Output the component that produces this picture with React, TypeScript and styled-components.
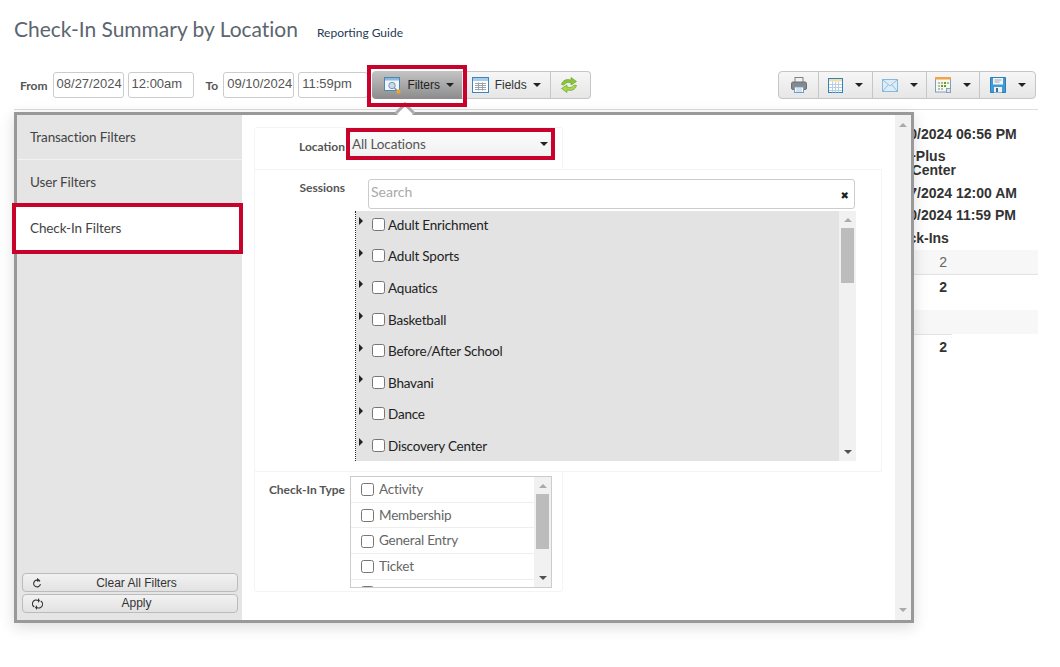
import styled, { createGlobalStyle } from "styled-components";

const RED = "#c8032b";

const GlobalStyle = createGlobalStyle`
  html, body { margin: 0; padding: 0; background: #fff; }
  body { width: 1060px; height: 667px; overflow: hidden; font-family: "Liberation Sans", Arial, sans-serif; color: #333; }
`;

const sessions = [
  "Adult Enrichment",
  "Adult Sports",
  "Aquatics",
  "Basketball",
  "Before/After School",
  "Bhavani",
  "Dance",
  "Discovery Center",
];

const checkInTypes = ["Activity", "Membership", "General Entry", "Ticket", "Admission"];

const FilterIcon = () => (
  <svg width="17" height="17" viewBox="0 0 17 17">
    <rect x=".5" y=".5" width="15" height="13" fill="#f1f6fa" stroke="#4a87b5" />
    <rect x="1" y="1" width="14" height="2.500" fill="#8db9da" />
    <circle cx="8" cy="8.500" r="3.200" fill="#c4dcee" stroke="#7e95a6" />
    <path d="M10.300 10.800l2.500 2.500" stroke="#7e95a6" strokeWidth="1.400" />
    <rect x="12.500" y="12.500" width="4" height="4" rx="1.500" fill="#f0a52a" />
  </svg>
);

const FieldsIcon = () => (
  <svg width="17" height="16" viewBox="0 0 17 16">
    <rect x=".5" y=".5" width="16" height="15" fill="#fff" stroke="#3a86bd" />
    <rect x="1" y="1" width="15" height="3" fill="#a9cbe5" />
    <path d="M3 6.500h11M3 8.500h11M3 10.500h11M3 12.500h11M6.500 5.500v8M10.500 5.500v8" stroke="#9aa3aa" fill="none" />
  </svg>
);

const RefreshIcon = () => (
  <svg width="18" height="16" viewBox="0 0 18 16">
    <path d="M1.500 7.500C2.500 3.500 6.500 1.500 11 3.200V.5l5.500 4-5.500 3.500V5.800C8 5 5.500 5.500 4 8z" fill="#8cc63a" stroke="#5c9a1c" strokeWidth=".6" />
    <path d="M16.500 8.500c-1 4-5 6-9.500 4.300v2.700L1.500 11.500 7 8v2.200c3 .8 5.500.3 7-2.200z" fill="#a8d84a" stroke="#5c9a1c" strokeWidth=".6" />
  </svg>
);

const PrintIcon = () => (
  <svg width="16" height="16" viewBox="0 0 16 16">
    <rect x="4" y=".5" width="8" height="5" fill="#eef1f3" stroke="#7d8387" />
    <rect x=".5" y="5" width="15" height="7.500" rx="1.500" fill="#84898d" stroke="#6b6f73" />
    <rect x="3.500" y="10" width="9" height="5.500" fill="#fff" stroke="#6f9fc4" />
    <path d="M5 12h6M5 14h6" stroke="#a9c3d6" />
  </svg>
);

const GridIcon = () => (
  <svg width="15" height="15" viewBox="0 0 15 15">
    <rect x=".5" y=".5" width="14" height="14" fill="#fff" stroke="#2f83bd" />
    <rect x="1" y="1" width="13" height="2.500" fill="#f5dfa0" />
    <path d="M1 6.500h13M1 9.500h13M1 12.500h13M4.500 3.500v11M7.500 3.500v11M10.500 3.500v11" stroke="#b5d0e4" fill="none" />
  </svg>
);

const MailIcon = () => (
  <svg width="16" height="13" viewBox="0 0 16 13">
    <rect x=".5" y=".5" width="15" height="12" fill="#dcedf9" stroke="#86b8da" />
    <path d="M1 1l7 6 7-6M1 12l5-6M15 12l-5-6" stroke="#8ebfe0" fill="none" />
  </svg>
);

const ScheduleIcon = () => (
  <svg width="16" height="16" viewBox="0 0 16 16">
    <rect x=".5" y=".5" width="15" height="14.500" fill="#f6f6f2" stroke="#7ba0bd" />
    <rect x="0" y="0" width="16" height="2.500" fill="#f0a24c" />
    <path d="M3 5h2v2H3zM3 8h2v2H3zM3 11h2v2H3zM6 11h2v2H6z" fill="#b9bdb2" />
    <path d="M9 5h2v2H9zM6 8h2v2H6zM9 8h2v2H9z" fill="#5f9e27" />
    <path d="M12 5h2v2h-2zM6 5h2v2H6z" fill="#a9c07a" />
    <rect x="11.500" y="11.500" width="4" height="4" fill="#dfe4e8" stroke="#8ba0b2" />
  </svg>
);

const SaveIcon = () => (
  <svg width="16" height="16" viewBox="0 0 16 16">
    <path d="M.5.5h15v15H.5z" fill="#3f9ad6" stroke="#2b7db5" />
    <rect x="3" y="1" width="10" height="6.500" fill="#f2f5f7" />
    <path d="M4.500 3h7M4.500 5h5" stroke="#99a9b5" />
    <rect x="4" y="10" width="8" height="5.500" fill="#eef1f3" />
    <rect x="6" y="11" width="2" height="4" fill="#3a6f96" />
  </svg>
);

const ClearIcon = () => (
  <svg width="10" height="11" viewBox="0 0 10 11">
    <path d="M7.800 4A3.400 3.400 0 1 0 8.400 6.500" fill="none" stroke="#333" strokeWidth="1.100" />
    <path d="M5 .5L8.500 3 5 4.300z" fill="#333" />
  </svg>
);

const ApplyIcon = () => (
  <svg width="11" height="13" viewBox="0 0 11 13">
    <path d="M2.300 9.500A3.700 3.700 0 0 1 6 3M8.700 3.500A3.700 3.700 0 0 1 5 10" fill="none" stroke="#333" strokeWidth="1.100" />
    <path d="M6 .5v5L8 3zM5 7.500v5L3 10z" fill="#333" />
  </svg>
);

export default function App() {
  return (
    <>
      <GlobalStyle />
      <Page>
        <TitleRow>
          <Title>Check-In Summary by Location</Title>
          <GuideLink>Reporting Guide</GuideLink>
        </TitleRow>
        <Toolbar>
          <FieldLabel>From</FieldLabel>
          <DateBox $width={71}>08/27/2024</DateBox>
          <DateBox $width={66}>12:00am</DateBox>
          <FieldLabel $gap>To</FieldLabel>
          <DateBox $width={71}>09/10/2024</DateBox>
          <DateBox $width={70}>11:59pm</DateBox>
          <ButtonGroup>
            <FiltersButton>
              <FilterIcon />
              <span>Filters</span>
              <Caret />
            </FiltersButton>
            <ToolButton $width={89}>
              <FieldsIcon />
              <span>Fields</span>
              <Caret />
            </ToolButton>
            <ToolButton $width={40} $nudge={3}>
              <RefreshIcon />
            </ToolButton>
          </ButtonGroup>
          <ActionGroup>
            <ActionButton $width={40}>
              <PrintIcon />
            </ActionButton>
            <ActionButton $width={54}>
              <GridIcon />
              <Caret />
            </ActionButton>
            <ActionButton $width={54}>
              <MailIcon />
              <Caret />
            </ActionButton>
            <ActionButton $width={53}>
              <ScheduleIcon />
              <Caret />
            </ActionButton>
            <ActionButton $width={55}>
              <SaveIcon />
              <Caret />
            </ActionButton>
          </ActionGroup>
        </Toolbar>
        <Rule />
        <Report>
          <ReportLine>09/10/2024 06:56 PM</ReportLine>
          <ReportBlock>
            Rec+Plus
            <br />
            Rec Center
          </ReportBlock>
          <ReportLine>08/27/2024 12:00 AM</ReportLine>
          <ReportLine>09/10/2024 11:59 PM</ReportLine>
          <ReportHead>Check-Ins</ReportHead>
          <ReportRow $shaded>
            <ReportValue>2</ReportValue>
          </ReportRow>
          <ReportRow>
            <ReportValue $bold>2</ReportValue>
          </ReportRow>
          <ReportSpacer />
          <ReportRow>
            <ReportValue $bold $ruled>
              2
            </ReportValue>
          </ReportRow>
        </Report>

        <FilterPanel>
          <Notch />
          <Sidebar>
            <SideItem>Transaction Filters</SideItem>
            <SideItem>User Filters</SideItem>
            <SideItem $active>Check-In Filters</SideItem>
            <SideActions>
              <SideButton $low>
                <ClearIcon />
                <span>Clear All Filters</span>
              </SideButton>
              <SideButton>
                <ApplyIcon />
                <span>Apply</span>
              </SideButton>
            </SideActions>
          </Sidebar>
          <PanelBody>
            <Forms>
              <LocationRow>
                <RowLabel $inset={11}>Location</RowLabel>
                <LocationSelect>
                  <span>All Locations</span>
                  <Caret />
                </LocationSelect>
              </LocationRow>
              <SessionsRow>
                <RowLabel>Sessions</RowLabel>
                <SessionsColumn>
                  <SearchBox>
                    <span>Search</span>
                    <ClearX>✖</ClearX>
                  </SearchBox>
                  <Tree>
                    <TreeList>
                      {sessions.map((name) => (
                        <TreeRow key={name}>
                          <TreeArrow />
                          <Check />
                          <TreeName>{name}</TreeName>
                        </TreeRow>
                      ))}
                    </TreeList>
                    <Scrollbar>
                      <UpArrow $dim />
                      <ScrollThumb />
                      <DownArrow />
                    </Scrollbar>
                  </Tree>
                </SessionsColumn>
              </SessionsRow>
              <TypeRow>
                <RowLabel>Check-In Type</RowLabel>
                <TypeBox>
                  <TypeList>
                    {checkInTypes.map((name) => (
                      <TypeItem key={name}>
                        <Check />
                        <TypeName>{name}</TypeName>
                      </TypeItem>
                    ))}
                  </TypeList>
                  <Scrollbar>
                    <UpArrow $dim />
                    <ScrollThumb />
                    <DownArrow />
                  </Scrollbar>
                </TypeBox>
              </TypeRow>
            </Forms>
            <PanelScroll>
              <UpArrow $dim />
              <DownArrow $dim />
            </PanelScroll>
          </PanelBody>
        </FilterPanel>
      </Page>
    </>
  );
}

const Page = styled.div`
  position: relative;
  width: 1060px;
  height: 667px;
  padding: 0 22px 0 14px;
  box-sizing: border-box;
  overflow: hidden;
`;

const TitleRow = styled.div`
  display: flex;
  align-items: baseline;
  gap: 19px;
  height: 71px;
  padding-top: 16px;
  box-sizing: border-box;
`;

const Title = styled.h1`
  margin: 0;
  font: 400 21px/26px Lato, sans-serif;
  letter-spacing: -0.02px;
  color: #5b6670;
`;

const GuideLink = styled.a`
  font: 400 12px/16px Lato, sans-serif;
  color: #1f3a56;
`;

const Toolbar = styled.div`
  display: flex;
  align-items: flex-start;
  height: 38px;
  padding-left: 6px;
`;

const FieldLabel = styled.span<{ $gap?: boolean }>`
  font: 700 12px/28px Lato, sans-serif;
  color: #555;
  margin: 1px 5px 0 ${({ $gap }) => ($gap ? "8px" : "0")};
`;

const DateBox = styled.div<{ $width: number }>`
  width: ${({ $width }) => $width}px;
  height: 26px;
  margin-right: 4px;
  margin-top: 1px;
  padding-left: 3px;
  box-sizing: border-box;
  border: 1px solid #ccc;
  border-radius: 3px;
  font: 400 13px/22px "Liberation Sans", sans-serif;
  color: #555;
`;

const ButtonGroup = styled.div`
  display: flex;
`;

const ToolButton = styled.div<{ $width: number; $nudge?: number }>`
  width: ${({ $width }) => $width}px;
  height: 28px;
  box-sizing: border-box;
  display: flex;
  align-items: center;
  justify-content: center;
  gap: 6px;
  padding: 0 ${({ $nudge }) => $nudge ?? 0}px 0 0;
  font: 400 12px "Liberation Sans", sans-serif;
  color: #333;
  background: linear-gradient(#f6f6f6, #e6e6e6);
  border: 1px solid #c6c6c6;
  border-left: none;
  &:last-child {
    border-radius: 0 4px 4px 0;
  }
`;

const FiltersButton = styled.div`
  position: relative;
  width: 90px;
  height: 28px;
  box-sizing: border-box;
  display: flex;
  align-items: center;
  justify-content: center;
  gap: 6px;
  padding-left: 4px;
  font: 400 12px "Liberation Sans", sans-serif;
  color: #222;
  background: linear-gradient(#c4c4c4, #8c8c8c);
  border-radius: 4px 0 0 4px;
  z-index: 3;
  &::after {
    content: "";
    position: absolute;
    inset: -6px -5px -8px -5px;
    border: 4px solid ${RED};
  }
`;

const ActionGroup = styled.div`
  display: flex;
  margin-left: auto;
  margin-right: 2px;
  border: 1px solid #c6c6c6;
  border-radius: 4px;
  height: 28px;
  box-sizing: border-box;
  background: linear-gradient(#f6f6f6, #e6e6e6);
  overflow: hidden;
`;

const ActionButton = styled.div<{ $width: number }>`
  width: ${({ $width }) => $width}px;
  display: flex;
  align-items: center;
  justify-content: center;
  gap: 12px;
  box-sizing: border-box;
  border-right: 1px solid #c6c6c6;
  &:last-child {
    border-right: none;
  }
`;

const Caret = styled.i`
  display: block;
  width: 0;
  height: 0;
  border-left: 4px solid transparent;
  border-right: 4px solid transparent;
  border-top: 4px solid #222;
`;

const Rule = styled.div`
  height: 1px;
  background: #ddd;
`;

const Report = styled.div`
  margin-left: 868px;
  padding-top: 16px;
  font: 700 14px/16px "Liberation Sans", sans-serif;
  color: #333;
`;

const ReportLine = styled.div`
  white-space: nowrap;
  margin-bottom: 6px;
`;

const ReportBlock = styled.div`
  line-height: 14px;
  margin: 7px 0 8px;
  white-space: nowrap;
`;

const ReportHead = styled.div`
  margin-top: 7px;
  height: 20px;
`;

const ReportRow = styled.div<{ $shaded?: boolean }>`
  height: ${({ $shaded }) => ($shaded ? "25px" : "35px")};
  background: ${({ $shaded }) => ($shaded ? "#f7f7f7" : "transparent")};
  border-bottom: ${({ $shaded }) => ($shaded ? "1px solid #e2e2e2" : "none")};
  box-sizing: border-box;
`;

const ReportSpacer = styled.div`
  height: 24px;
  background: #f7f7f7;
`;

const ReportValue = styled.div<{ $bold?: boolean; $ruled?: boolean }>`
  width: 70px;
  padding-right: 5px;
  box-sizing: border-box;
  text-align: right;
  line-height: ${({ $ruled }) => ($ruled ? "24px" : "25px")};
  font-weight: ${({ $bold }) => ($bold ? 700 : 400)};
  color: ${({ $bold }) => ($bold ? "#333" : "#666")};
  border-top: ${({ $ruled }) => ($ruled ? "1px solid #e2e2e2" : "none")};
`;

const FilterPanel = styled.div`
  position: absolute;
  left: 14px;
  top: 112px;
  width: 900px;
  height: 511px;
  box-sizing: border-box;
  display: flex;
  background: #fff;
  border: 3px solid #999;
  box-shadow: 0 4px 14px rgba(0, 0, 0, 0.14);
`;

const Notch = styled.div`
  position: absolute;
  left: 381px;
  top: -10px;
  width: 14px;
  height: 14px;
  background: #fff;
  border-left: 3px solid #aaa;
  border-top: 3px solid #aaa;
  box-sizing: border-box;
  transform: rotate(45deg);
`;

const Sidebar = styled.div`
  width: 225px;
  flex: none;
  display: flex;
  flex-direction: column;
  background: #e5e5e5;
`;

const SideItem = styled.div<{ $active?: boolean }>`
  height: ${({ $active }) => ($active ? "51px" : "45px")};
  box-sizing: border-box;
  padding-left: 13px;
  font: 400 13.5px/44px Lato, sans-serif;
  letter-spacing: -0.12px;
  color: #444;
  border-bottom: 1px solid #f2f2f2;
  ${({ $active }) =>
    $active &&
    `
    position: relative;
    margin: -2px -1px 0 -5px;
    padding-left: 14px;
    background: #fff;
    border: 4px solid ${RED};
    line-height: 43px;
  `}
`;

const SideActions = styled.div`
  margin-top: auto;
  padding: 0 4px 7px 5px;
  display: flex;
  flex-direction: column;
  gap: 2px;
`;

const SideButton = styled.div<{ $low?: boolean }>`
  position: relative;
  height: 19px;
  box-sizing: border-box;
  display: flex;
  justify-content: center;
  padding: ${({ $low }) => ($low ? "1px" : "0")} 0 0 13px;
  font: 400 12px/16px "Liberation Sans", sans-serif;
  color: #333;
  background: linear-gradient(#f2f2f2, #e2e2e2);
  border: 1px solid #bbb;
  border-radius: 4px;
  svg {
    position: absolute;
    left: 9px;
    top: 50%;
    transform: translateY(-50%);
  }
`;

const PanelBody = styled.div`
  flex: 1;
  display: flex;
  min-width: 0;
  padding-top: 12px;
`;

const Forms = styled.div`
  margin-left: 12px;
  width: 628px;
  flex: none;
  display: flex;
  flex-direction: column;
`;

const LocationRow = styled.div`
  display: flex;
  width: 309px;
  height: 42px;
  box-sizing: border-box;
  border: 1px solid #f4f4f4;
  border-bottom: none;
  border-radius: 3px 3px 0 0;
`;

const RowLabel = styled.div<{ $inset?: number }>`
  width: 90px;
  flex: none;
  text-align: right;
  font: 700 12px/16px Lato, sans-serif;
  color: #555;
  padding-top: ${({ $inset }) => $inset ?? 10}px;
  box-sizing: border-box;
`;

const LocationSelect = styled.div`
  position: relative;
  width: 201px;
  height: 24px;
  margin: 4px 0 0 5px;
  box-sizing: border-box;
  padding: 0 3px 0 2px;
  display: flex;
  align-items: center;
  justify-content: space-between;
  font: 400 13.5px/16px Lato, sans-serif;
  letter-spacing: -0.12px;
  color: #555;
  background: linear-gradient(#fbfbfb, #f1f1f1);
  outline: 4px solid ${RED};
`;

const SessionsRow = styled.div`
  display: flex;
  height: 303px;
  box-sizing: border-box;
  border: 1px solid #f4f4f4;
`;

const SessionsColumn = styled.div`
  display: flex;
  flex-direction: column;
  margin-left: 23px;
  padding-top: 9px;
`;

const SearchBox = styled.div`
  width: 487px;
  height: 30px;
  box-sizing: border-box;
  display: flex;
  align-items: center;
  justify-content: space-between;
  padding: 0 5px 5px 2px;
  border: 1px solid #ccc;
  border-radius: 3px;
  font: 400 14px/16px Lato, sans-serif;
  color: #aaa;
`;

const ClearX = styled.span`
  font: 400 10px/10px "DejaVu Sans", sans-serif;
  color: #222;
  margin-top: 9px;
`;

const Tree = styled.div`
  display: flex;
  width: 501px;
  height: 250px;
  margin: 2px 0 0 -13px;
  border-left: 1px dotted #222;
  box-sizing: border-box;
`;

const TreeList = styled.div`
  flex: 1;
  background: #e3e3e3;
  overflow: hidden;
  & > :first-child {
    margin-top: -2px;
  }
`;

const TreeRow = styled.div`
  display: flex;
  align-items: center;
  height: 31.6px;
  padding-left: 3px;
`;

const TreeArrow = styled.i`
  width: 0;
  height: 0;
  margin: -7px 9px 0 0;
  border-top: 4px solid transparent;
  border-bottom: 4px solid transparent;
  border-left: 4px solid #222;
`;

const Check = styled.i`
  display: block;
  flex: none;
  width: 13px;
  height: 13px;
  margin-top: -1px;
  box-sizing: border-box;
  background: #fff;
  border: 1px solid #767676;
  border-radius: 2.5px;
`;

const TreeName = styled.span`
  margin-left: 3px;
  font: 400 13.5px/16px Lato, sans-serif;
  letter-spacing: -0.2px;
  color: #222;
`;

const Scrollbar = styled.div`
  width: 17px;
  flex: none;
  background: #f1f1f1;
  display: flex;
  flex-direction: column;
  align-items: center;
  padding: 7px 0;
  box-sizing: border-box;
`;

const ScrollThumb = styled.div`
  align-self: stretch;
  margin: 6px 2px auto;
  height: 55px;
  background: #bcbcbc;
`;

const UpArrow = styled.i<{ $dim?: boolean }>`
  display: block;
  width: 0;
  height: 0;
  border-left: 4px solid transparent;
  border-right: 4px solid transparent;
  border-bottom: 4px solid ${({ $dim }) => ($dim ? "#aaa" : "#505050")};
`;

const DownArrow = styled.i<{ $dim?: boolean }>`
  display: block;
  width: 0;
  height: 0;
  border-left: 4px solid transparent;
  border-right: 4px solid transparent;
  border-top: 4px solid ${({ $dim }) => ($dim ? "#aaa" : "#505050")};
`;

const TypeRow = styled.div`
  display: flex;
  width: 309px;
  height: 120px;
  box-sizing: border-box;
  border: 1px solid #f4f4f4;
  border-top: none;
  border-radius: 0 0 3px 3px;
  gap: 5px;
`;

const TypeBox = styled.div`
  display: flex;
  width: 202px;
  height: 112px;
  margin-top: 4px;
  box-sizing: border-box;
  border: 1px solid #ccc;
`;

const TypeList = styled.div`
  flex: 1;
  overflow: hidden;
`;

const TypeItem = styled.div`
  display: flex;
  align-items: center;
  height: 25.7px;
  box-sizing: border-box;
  padding-left: 10px;
  border-bottom: 1px solid #eee;
  ${Check} {
    margin-top: 1px;
  }
`;

const TypeName = styled.span`
  margin: -1px 0 0 5px;
  font: 400 13.5px/16px Lato, sans-serif;
  letter-spacing: -0.2px;
  color: #666;
`;

const PanelScroll = styled.div`
  margin-left: auto;
  margin-top: -12px;
  width: 16px;
  background: #f1f1f1;
  display: flex;
  flex-direction: column;
  align-items: center;
  justify-content: space-between;
  padding: 8px 0;
  box-sizing: border-box;
`;
